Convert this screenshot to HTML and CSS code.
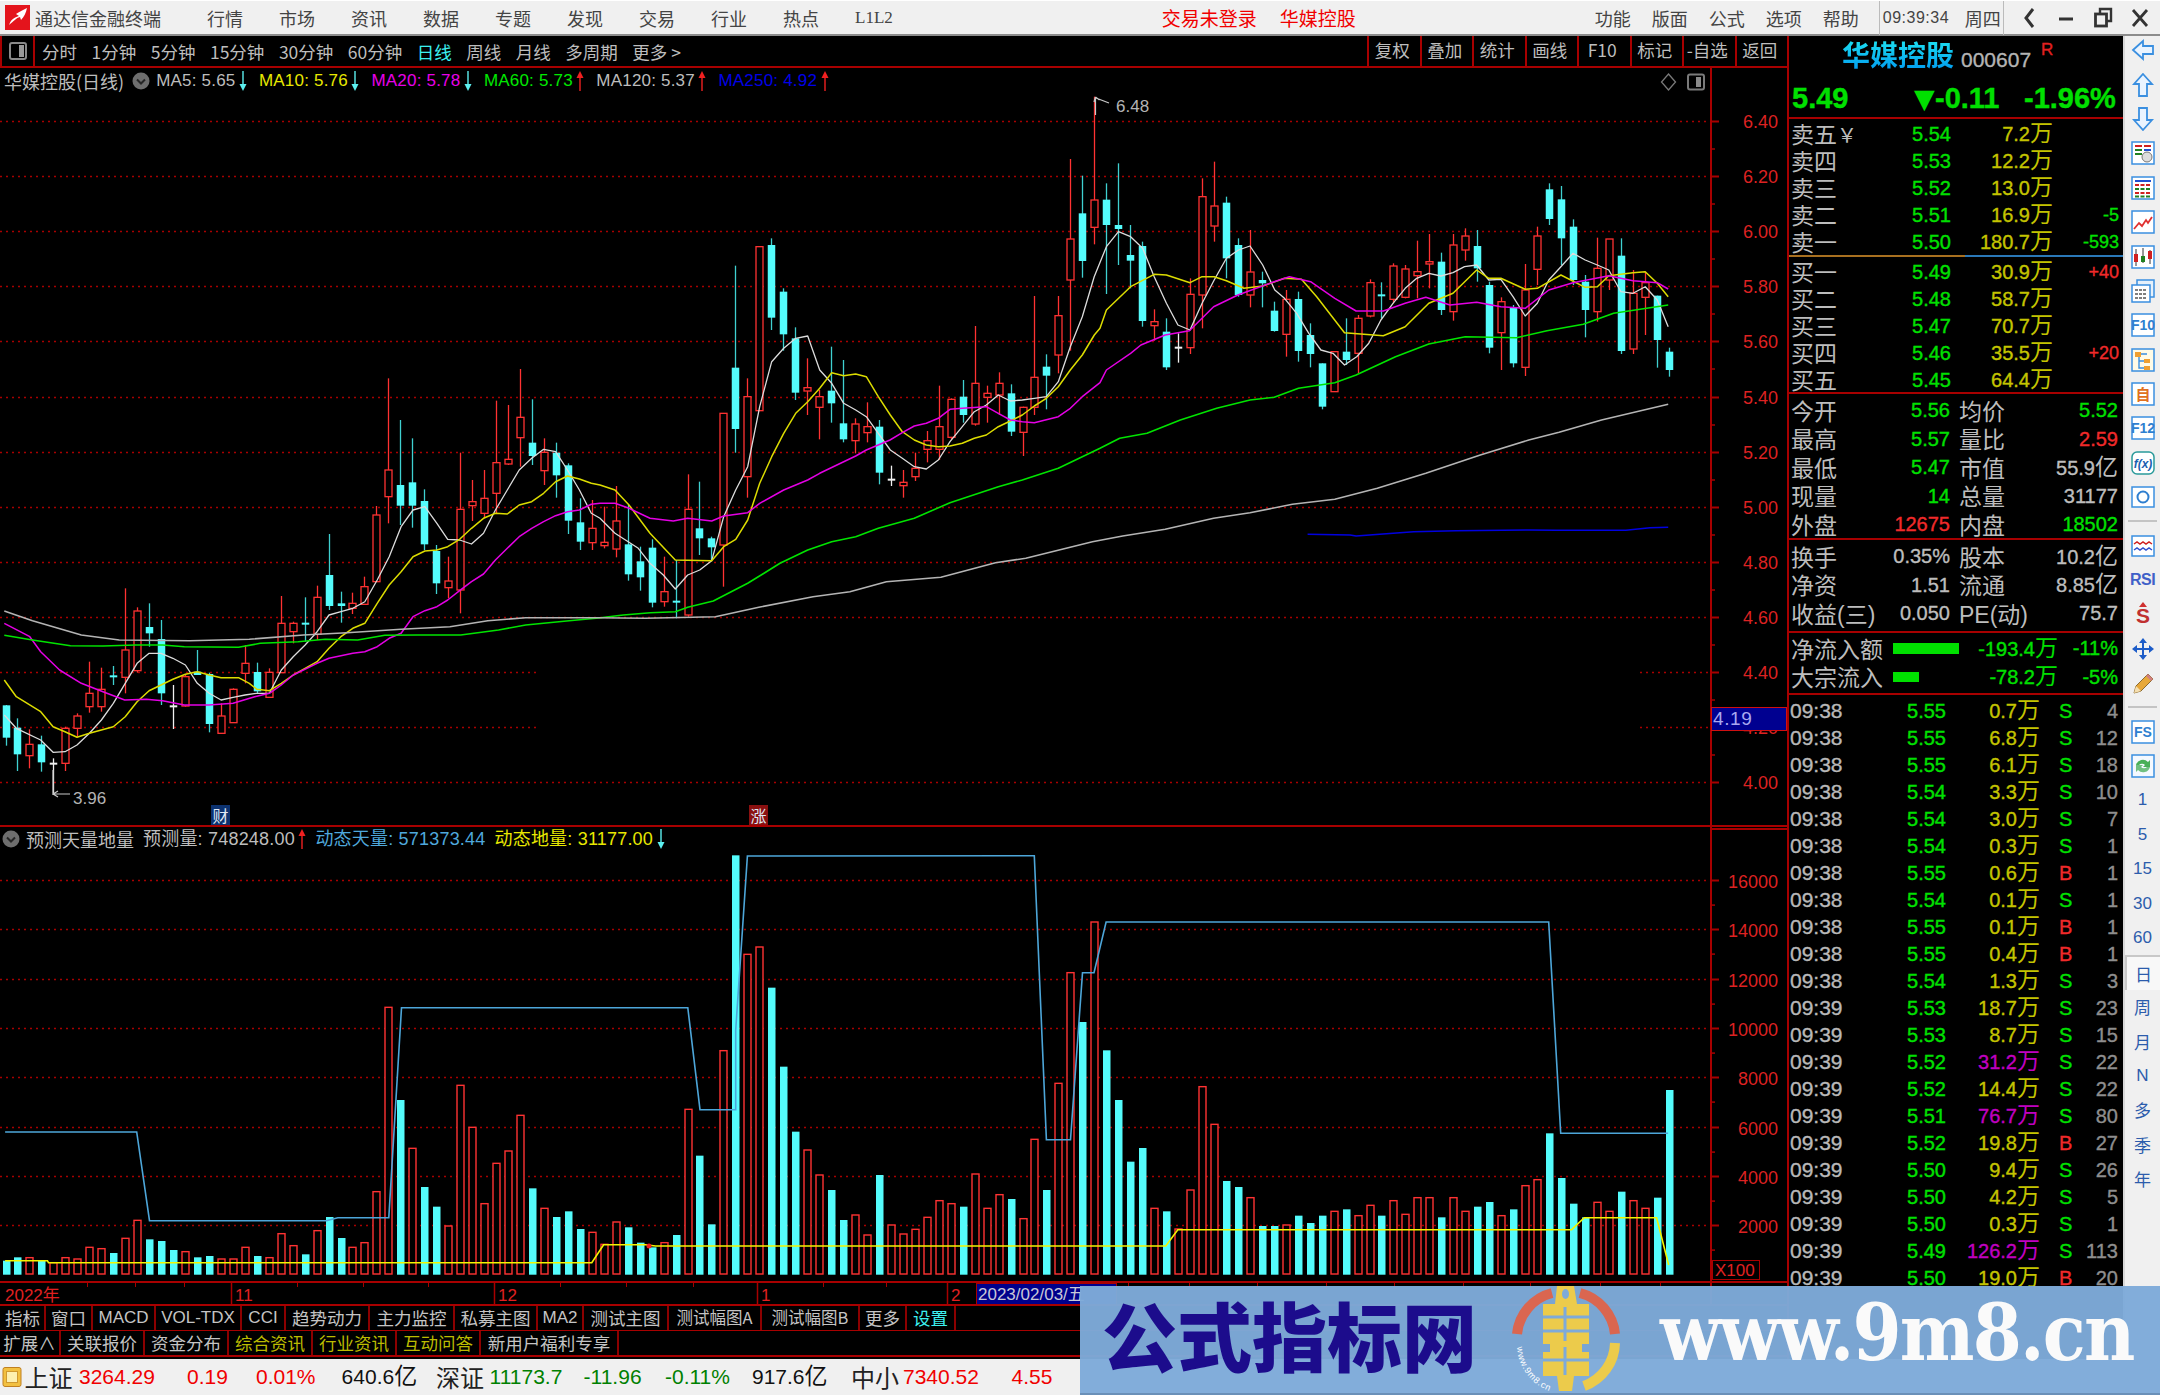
FILE: index.html
```html
<!DOCTYPE html>
<html lang="zh">
<head>
<meta charset="utf-8">
<title>通达信金融终端</title>
<link rel="stylesheet" href="styles.css">
</head>
<body>
<svg class="defs" width="0" height="0">
  <symbol id="a-up" viewBox="0 0 8 20"><path d="M4 20V5" stroke="currentColor" stroke-width="1.4"/><path d="M0.5 7L4 0l3.5 7z" fill="currentColor"/></symbol>
  <symbol id="a-dn" viewBox="0 0 8 20"><path d="M4 0v15" stroke="currentColor" stroke-width="1.4"/><path d="M0.5 13L4 20l3.5-7z" fill="currentColor"/></symbol>
  <symbol id="chev" viewBox="0 0 18 18"><circle cx="9" cy="9" r="8.5" fill="#6e6e6e"/><path d="M5 7.5l4 4 4-4" fill="none" stroke="#262626" stroke-width="2"/></symbol>
</svg>
<div class="app">
  <header class="menubar">
    <svg class="logo" viewBox="0 0 25 25"><rect width="25" height="25" fill="#e4141c"/><path d="M4 20c3-8 8-8 10-9L11 9c3-2 7-4 11-6-1 5-3 9-6 12l-1-3c-4 1-6 4-11 8z" fill="#fff"/></svg>
    <span class="appname">通达信金融终端</span>
    <nav class="menus">
      <span>行情</span><span>市场</span><span>资讯</span><span>数据</span><span>专题</span><span>发现</span><span>交易</span><span>行业</span><span>热点</span><span class="l2">L1L2</span>
    </nav>
    <span class="alert first">交易未登录</span>
    <span class="alert second">华媒控股</span>
    <nav class="menus right">
      <span>功能</span><span>版面</span><span>公式</span><span>选项</span><span>帮助</span>
    </nav>
    <div class="clock"><span class="time">09:39:34</span><span class="day">周四</span></div>
    <div class="winbtns">
      <svg viewBox="0 0 20 24"><path d="M14 3l-7 9 7 9" fill="none" stroke="#333" stroke-width="3"/></svg>
      <svg viewBox="0 0 20 24"><path d="M3 13h14" stroke="#333" stroke-width="3"/></svg>
      <svg viewBox="0 0 20 24"><path d="M7 7V3h11v12h-4" fill="none" stroke="#333" stroke-width="2.4"/><rect x="2.500" y="8" width="11" height="12" fill="none" stroke="#333" stroke-width="2.800"/></svg>
      <svg viewBox="0 0 20 24"><path d="M3 4l14 16M17 4L3 20" stroke="#333" stroke-width="2.800"/></svg>
    </div>
  </header>

  <div class="workspace">
    <section class="left">
      <div class="toolbar">
        <div class="panel-toggle"><svg viewBox="0 0 18 18"><rect x="1" y="1" width="16" height="16" rx="2" fill="none" stroke="#8a8a8a" stroke-width="2"/><rect x="10" y="3" width="5" height="12" fill="#9a9a9a"/></svg></div>
        <div class="periods">
          <span>分时</span><span>1分钟</span><span>5分钟</span><span>15分钟</span><span>30分钟</span><span>60分钟</span><span class="on">日线</span><span>周线</span><span>月线</span><span>多周期</span><span>更多 &gt;</span>
        </div>
        <div class="actions">
          <span>复权</span><span>叠加</span><span>统计</span><span>画线</span><span>F10</span><span>标记</span><span>-自选</span><span>返回</span>
        </div>
      </div>

      <div class="chart kline-wrap">
        <svg id="kline" class="kline" viewBox="0 68 1787 757"></svg>
        <div class="legend">
          <span class="gr name">华媒控股(日线)</span>
          <svg class="chev"><use href="#chev"/></svg>
          <span class="ma gr">MA5: 5.65<svg class="arr c-cy"><use href="#a-dn"/></svg></span>
          <span class="ma c-ye">MA10: 5.76<svg class="arr c-cy"><use href="#a-dn"/></svg></span>
          <span class="ma c-ma">MA20: 5.78<svg class="arr c-cy"><use href="#a-dn"/></svg></span>
          <span class="ma c-gn">MA60: 5.73<svg class="arr c-re"><use href="#a-up"/></svg></span>
          <span class="ma gr">MA120: 5.37<svg class="arr c-re"><use href="#a-up"/></svg></span>
          <span class="ma c-bl">MA250: 4.92<svg class="arr c-re"><use href="#a-up"/></svg></span>
        </div>
        <div class="tag price-tag">4.19</div>
        <div class="tag cai">财</div>
        <div class="tag zhang">涨</div>
      </div>

      <div class="chart vol-wrap">
        <svg id="vol" class="vol" viewBox="0 827 1787 454"></svg>
        <div class="legend vol-legend">
          <svg class="chev"><use href="#chev"/></svg>
          <span class="gr name">预测天量地量</span>
          <span class="ma gr">预测量: 748248.00<svg class="arr c-re"><use href="#a-up"/></svg></span>
          <span class="ma c-sky">动态天量: 571373.44</span>
          <span class="ma c-yl">动态地量: 31177.00<svg class="arr c-cy"><use href="#a-dn"/></svg></span>
        </div>
        <div class="x100">X100</div>
      </div>

      <svg id="dates" class="dates" viewBox="0 1283 1787 23"></svg>

      <div class="tabs one">
        <span>指标</span><span>窗口</span><span>MACD</span><span>VOL-TDX</span><span>CCI</span><span>趋势动力</span><span>主力监控</span><span>私募主图</span><span>MA2</span><span>测试主图</span><span>测试幅图A</span><span>测试幅图B</span><span>更多</span><span class="set">设置</span>
      </div>
      <div class="tabs two">
        <span>扩展∧</span><span>关联报价</span><span>资金分布</span><span class="ol">综合资讯</span><span class="ol">行业资讯</span><span class="ol">互动问答</span><span>新用户福利专享</span>
      </div>
    </section>

    <aside class="quote">
      <div class="head">
        <div class="title"><span class="sname">华媒控股</span><span class="code">000607</span><span class="rz">R</span></div>
        <div class="nowprice"><span>5.49</span><span class="chg"><i class="tri">▼</i>-0.11</span><span>-1.96%</span></div>
      </div>
      <div class="book sell">
        <div class="brow"><b>卖五<i class="yen">￥</i></b><span class="g">5.54</span><span class="y">7.2<i>万</i></span><span></span></div>
        <div class="brow"><b>卖四</b><span class="g">5.53</span><span class="y">12.2<i>万</i></span><span></span></div>
        <div class="brow"><b>卖三</b><span class="g">5.52</span><span class="y">13.0<i>万</i></span><span></span></div>
        <div class="brow"><b>卖二</b><span class="g">5.51</span><span class="y">16.9<i>万</i></span><span class="g small">-5</span></div>
        <div class="brow"><b>卖一</b><span class="g">5.50</span><span class="y">180.7<i>万</i></span><span class="g small">-593</span></div>
      </div>
      <div class="book-divider"><span></span><span></span></div>
      <div class="book buy">
        <div class="brow"><b>买一</b><span class="g">5.49</span><span class="y">30.9<i>万</i></span><span class="r small">+40</span></div>
        <div class="brow"><b>买二</b><span class="g">5.48</span><span class="y">58.7<i>万</i></span><span></span></div>
        <div class="brow"><b>买三</b><span class="g">5.47</span><span class="y">70.7<i>万</i></span><span></span></div>
        <div class="brow"><b>买四</b><span class="g">5.46</span><span class="y">35.5<i>万</i></span><span class="r small">+20</span></div>
        <div class="brow"><b>买五</b><span class="g">5.45</span><span class="y">64.4<i>万</i></span><span></span></div>
      </div>
      <div class="stats a">
        <div class="srow"><b>今开</b><span class="g">5.56</span><b>均价</b><span class="g">5.52</span></div>
        <div class="srow"><b>最高</b><span class="g">5.57</span><b>量比</b><span class="r">2.59</span></div>
        <div class="srow"><b>最低</b><span class="g">5.47</span><b>市值</b><span class="w">55.9<i>亿</i></span></div>
        <div class="srow"><b>现量</b><span class="g">14</span><b>总量</b><span class="w">31177</span></div>
        <div class="srow"><b>外盘</b><span class="r">12675</span><b>内盘</b><span class="g">18502</span></div>
      </div>
      <div class="stats b">
        <div class="srow"><b>换手</b><span class="w">0.35%</span><b>股本</b><span class="w">10.2<i>亿</i></span></div>
        <div class="srow"><b>净资</b><span class="w">1.51</span><b>流通</b><span class="w">8.85<i>亿</i></span></div>
        <div class="srow"><b>收益(三)</b><span class="w">0.050</span><b>PE(动)</b><span class="w">75.7</span></div>
      </div>
      <div class="flows">
        <div class="frow"><b>净流入额</b><span class="fbar"><em class="long"></em></span><span class="g">-193.4<i>万</i></span><span class="g">-11%</span></div>
        <div class="frow"><b>大宗流入</b><span class="fbar"><em class="short"></em></span><span class="g">-78.2<i>万</i></span><span class="g">-5%</span></div>
      </div>
      <div class="ticks">
        <div class="trow"><span>09:38</span><span class="g">5.55</span><span class="y">0.7<i>万</i></span><span class="g">S</span><span>4</span></div>
        <div class="trow"><span>09:38</span><span class="g">5.55</span><span class="y">6.8<i>万</i></span><span class="g">S</span><span>12</span></div>
        <div class="trow"><span>09:38</span><span class="g">5.55</span><span class="y">6.1<i>万</i></span><span class="g">S</span><span>18</span></div>
        <div class="trow"><span>09:38</span><span class="g">5.54</span><span class="y">3.3<i>万</i></span><span class="g">S</span><span>10</span></div>
        <div class="trow"><span>09:38</span><span class="g">5.54</span><span class="y">3.0<i>万</i></span><span class="g">S</span><span>7</span></div>
        <div class="trow"><span>09:38</span><span class="g">5.54</span><span class="y">0.3<i>万</i></span><span class="g">S</span><span>1</span></div>
        <div class="trow"><span>09:38</span><span class="g">5.55</span><span class="y">0.6<i>万</i></span><span class="r">B</span><span>1</span></div>
        <div class="trow"><span>09:38</span><span class="g">5.54</span><span class="y">0.1<i>万</i></span><span class="g">S</span><span>1</span></div>
        <div class="trow"><span>09:38</span><span class="g">5.55</span><span class="y">0.1<i>万</i></span><span class="r">B</span><span>1</span></div>
        <div class="trow"><span>09:38</span><span class="g">5.55</span><span class="y">0.4<i>万</i></span><span class="r">B</span><span>1</span></div>
        <div class="trow"><span>09:38</span><span class="g">5.54</span><span class="y">1.3<i>万</i></span><span class="g">S</span><span>3</span></div>
        <div class="trow"><span>09:39</span><span class="g">5.53</span><span class="y">18.7<i>万</i></span><span class="g">S</span><span>23</span></div>
        <div class="trow"><span>09:39</span><span class="g">5.53</span><span class="y">8.7<i>万</i></span><span class="g">S</span><span>15</span></div>
        <div class="trow"><span>09:39</span><span class="g">5.52</span><span class="p">31.2<i>万</i></span><span class="g">S</span><span>22</span></div>
        <div class="trow"><span>09:39</span><span class="g">5.52</span><span class="y">14.4<i>万</i></span><span class="g">S</span><span>22</span></div>
        <div class="trow"><span>09:39</span><span class="g">5.51</span><span class="p">76.7<i>万</i></span><span class="g">S</span><span>80</span></div>
        <div class="trow"><span>09:39</span><span class="g">5.52</span><span class="y">19.8<i>万</i></span><span class="r">B</span><span>27</span></div>
        <div class="trow"><span>09:39</span><span class="g">5.50</span><span class="y">9.4<i>万</i></span><span class="g">S</span><span>26</span></div>
        <div class="trow"><span>09:39</span><span class="g">5.50</span><span class="y">4.2<i>万</i></span><span class="g">S</span><span>5</span></div>
        <div class="trow"><span>09:39</span><span class="g">5.50</span><span class="y">0.3<i>万</i></span><span class="g">S</span><span>1</span></div>
        <div class="trow"><span>09:39</span><span class="g">5.49</span><span class="p">126.2<i>万</i></span><span class="g">S</span><span>113</span></div>
        <div class="trow"><span>09:39</span><span class="g">5.50</span><span class="y">19.0<i>万</i></span><span class="r">B</span><span>20</span></div>
      </div>
    </aside>

    <aside class="side">
      <div class="slot first"><svg viewBox="0 0 24 24"><path d="M2 12L12 3v5h10v8H12v5z" fill="#eaf4ff" stroke="#3a8fe0" stroke-width="1.800"/></svg></div>
      <div class="slot"><svg viewBox="0 0 24 24"><path d="M12 1l9 10h-5v12H8V11H3z" fill="#eaf4ff" stroke="#3a8fe0" stroke-width="1.800"/></svg></div>
      <div class="slot"><svg viewBox="0 0 24 24"><path d="M12 23l9-10h-5V1H8v12H3z" fill="#eaf4ff" stroke="#3a8fe0" stroke-width="1.800"/></svg></div>
      <div class="slot"><svg viewBox="0 0 24 24"><rect x="1" y="1" width="22" height="22" fill="#fff" stroke="#3a8fe0" stroke-width="1.500"/><path d="M4 5h7M13 5h7" stroke="#d02020" stroke-width="2"/><path d="M4 9h7M4 13h7" stroke="#208020" stroke-width="2"/><path d="M13 9h7" stroke="#2050d0" stroke-width="2"/><circle cx="16" cy="16" r="5" fill="#ddd" stroke="#777"/></svg></div>
      <div class="slot"><svg viewBox="0 0 24 24"><rect x="1" y="1" width="22" height="22" fill="#fff" stroke="#3a8fe0" stroke-width="1.500"/><path d="M4 5h16" stroke="#2050d0" stroke-width="2"/><path d="M4 9h16M4 17h16" stroke="#d02020" stroke-width="2" stroke-dasharray="4 1.500"/><path d="M4 13h16M4 20.500h16" stroke="#208020" stroke-width="2" stroke-dasharray="4 1.500"/></svg></div>
      <div class="slot"><svg viewBox="0 0 24 24"><rect x="1" y="1" width="22" height="22" fill="#fff" stroke="#3a8fe0" stroke-width="1.500"/><path d="M3 19l5-6 3 3 4-6 2 3 4-6" fill="none" stroke="#e03030" stroke-width="1.800"/></svg></div>
      <div class="slot"><svg viewBox="0 0 24 24"><rect x="1" y="1" width="22" height="22" fill="#fff" stroke="#3a8fe0" stroke-width="1.500"/><path d="M5 4v17M12 3v15M19 5v14" stroke="#333"/><rect x="3" y="9" width="4" height="8" fill="#d02020"/><rect x="10" y="11" width="4" height="6" fill="#208020"/><rect x="17" y="6" width="4" height="8" fill="#d02020"/></svg></div>
      <div class="slot"><svg viewBox="0 0 24 24"><rect x="6" y="1" width="17" height="17" fill="#e6f1fb" stroke="#3a8fe0" stroke-width="1.500"/><rect x="1" y="6" width="18" height="17" fill="#fff" stroke="#3a8fe0" stroke-width="1.500"/><path d="M4 11h12M4 15h12M4 19h12" stroke="#555" stroke-width="1.500" stroke-dasharray="3 1"/></svg></div>
      <div class="slot"><svg viewBox="0 0 24 24"><rect x="1" y="1" width="22" height="22" fill="#fff" stroke="#3a8fe0" stroke-width="1.500"/><text class="icotxt" x="12" y="17">F10</text></svg></div>
      <div class="slot"><svg viewBox="0 0 24 24"><rect x="1" y="1" width="22" height="22" fill="#fffbe6" stroke="#3a8fe0" stroke-width="1.500"/><path d="M8 6h8M8 6v14h8M8 13h8" fill="none" stroke="#3a8fe0" stroke-width="1.400"/><rect x="4" y="4" width="6" height="5" fill="#f0a030"/><rect x="13" y="11" width="6" height="4" fill="#f0a030"/><rect x="13" y="18" width="6" height="4" fill="#f0a030"/></svg></div>
      <div class="slot"><svg viewBox="0 0 24 24"><rect x="1" y="1" width="22" height="22" fill="#fff" stroke="#3a8fe0" stroke-width="1.500"/><text class="icotxt zi" x="12" y="18">自</text></svg></div>
      <div class="slot"><svg viewBox="0 0 24 24"><rect x="1" y="1" width="22" height="22" fill="#fff" stroke="#3a8fe0" stroke-width="1.500"/><text class="icotxt" x="12" y="17">F12</text></svg></div>
      <div class="slot"><svg viewBox="0 0 24 24"><rect x="1" y="1" width="22" height="22" rx="5" fill="#fff" stroke="#2a9a9a" stroke-width="1.500"/><text class="icotxt fx" x="12" y="17">f(x)</text></svg></div>
      <div class="slot"><svg viewBox="0 0 24 24"><rect x="1" y="2" width="22" height="20" fill="#fff" stroke="#3a8fe0" stroke-width="1.500"/><circle cx="12" cy="12" r="5.500" fill="none" stroke="#2f7fd0" stroke-width="2"/></svg></div>
      <div class="rule"></div>
      <div class="slot"><svg viewBox="0 0 24 24"><rect x="1" y="2" width="22" height="20" fill="#fff" stroke="#3a8fe0" stroke-width="1.500"/><path d="M3 10l3-2 3 2 3-2 3 2 3-2 3 2" fill="none" stroke="#d02020" stroke-width="1.500"/><path d="M3 16l3-2 3 2 3-2 3 2 3-2 3 2" fill="none" stroke="#3050d0" stroke-width="1.500"/></svg></div>
      <div class="slot"><span class="rsi">RSI</span></div>
      <div class="slot"><svg viewBox="0 0 24 24"><path d="M12 0l4 5H8z" fill="#d03030"/><text class="icotxt dollar" x="12" y="21">S</text></svg></div>
      <div class="slot"><svg viewBox="0 0 24 24"><path d="M12 1l4 5h-3v5h5V8l5 4-5 4v-3h-5v5h3l-4 5-4-5h3v-5H6v3l-5-4 5-4v3h5V6H8z" fill="#1c5cc8"/></svg></div>
      <div class="slot"><svg viewBox="0 0 24 24"><path d="M3 22l2-7L17 3l5 5L10 20z" fill="#e8a838" stroke="#8a6a30" stroke-width="1"/><path d="M3 22l2-7 5 5z" fill="#f5dfb0"/><path d="M17 3l5 5-2 2-5-5z" fill="#d08080"/></svg></div>
      <div class="rule"></div>
      <div class="slot"><svg viewBox="0 0 24 24"><rect x="1" y="1" width="22" height="22" fill="#fff" stroke="#3a8fe0" stroke-width="1.500"/><text class="icotxt" x="12" y="17">FS</text></svg></div>
      <div class="slot"><svg viewBox="0 0 24 24"><rect x="1" y="1" width="22" height="22" fill="#f4f9ff" stroke="#3a8fe0" stroke-width="1.500"/><path d="M5 11a7 7 0 0 1 12-3l2-2v7h-7l2-2a4 4 0 0 0-6 0z" fill="#48b058"/><path d="M19 13a7 7 0 0 1-12 3l-2 2v-7h7l-2 2a4 4 0 0 0 6 0z" fill="#70c080"/></svg></div>
      <div class="slot t">1</div><div class="slot t">5</div><div class="slot t">15</div><div class="slot t">30</div><div class="slot t">60</div>
      <div class="slot t sel">日</div>
      <div class="slot t">周</div><div class="slot t">月</div><div class="slot t">N</div><div class="slot t">多</div><div class="slot t">季</div><div class="slot t">年</div>
    </aside>
  </div>

  <footer class="status">
    <svg class="sicon" viewBox="0 0 20 20"><rect x="1" y="0.500" width="18" height="19" rx="2" fill="#f2c040" stroke="#c08020"/><rect x="4.500" y="4.500" width="11" height="11" fill="#fdf0b0" stroke="#d09a30"/></svg>
    <span class="ix">上证</span><span class="r">3264.29</span><span class="r">0.19</span><span class="r">0.01%</span><span class="k">640.6<i>亿</i></span>
    <span class="ix">深证</span><span class="d">11173.7</span><span class="d">-11.96</span><span class="d">-0.11%</span><span class="k">917.6<i>亿</i></span>
    <span class="ix">中小</span><span class="r">7340.52</span><span class="r">4.55</span>
  </footer>

  <div class="banner">
    <span class="bcn">公式指标网</span>
    <svg class="blogo" viewBox="0 0 110 110">
      <path id="arc-t" d="M5 62A50 50 0 0 0 44 108" fill="none"/>
      <path d="M5 49A47 47 0 0 1 40 8M68 8A47 47 0 0 1 103 49" fill="none" stroke="#da6650" stroke-width="10"/>
      <path d="M103 58A47 47 0 0 1 72 101" fill="none" stroke="#eccb4b" stroke-width="10"/>
      <path d="M45 1h17l3 18h12v40H70v8h7v24H62l-2 15H47l-2-15H31V67h7v-8h-7V19h12z" fill="#eccb4b"/>
      <ellipse cx="53.500" cy="9" rx="3.500" ry="5" fill="#7eaad9"/>
      <path d="M31 32h46M31 46h46M53 22v34M31 75h46M53 62v28" stroke="#7eaad9" stroke-width="3"/>
      <text class="arctext"><textPath href="#arc-t">www.9m8.cn</textPath></text>
    </svg>
    <span class="ben">www.9m8.cn</span>
  </div>
</div>
<script src="chart.js"></script>
</body>
</html>
```

FILE: styles.css
```css
* { box-sizing: border-box; }
html, body { margin: 0; padding: 0; background: #000; }
body { width: 2160px; height: 1395px; overflow: hidden; font-family: "Liberation Sans", "Noto Sans CJK SC", sans-serif; }
i, em { font-style: normal; }
b { font-weight: 400; }
.defs { position: absolute; }
.app { position: relative; width: 2160px; height: 1395px; display: flex; flex-direction: column; }

/* menu bar */
.menubar { height: 36px; flex: none; display: flex; align-items: center; background: #f0f0f0; border-bottom: 2px solid #8c8c8c; border-top: 1px solid #fff; color: #444; font-size: 18px; font-family: "Noto Sans CJK SC", sans-serif; line-height: 1; }
.logo { width: 25px; height: 25px; margin-left: 5px; flex: none; }
.appname { margin-left: 5px; width: 127px; white-space: nowrap; }
.menus { display: flex; gap: 36px; margin-left: 45px; }
.menus span { white-space: nowrap; }
.menus .l2 { font-family: "Liberation Serif", serif; font-size: 17px; }
.alert { color: #f00000; font-size: 19px; white-space: nowrap; }
.alert.first { margin-left: 269px; }
.alert.second { margin-left: 23px; }
.menus.right { margin-left: 239px; gap: 21px; }
.clock { margin-left: 20px; height: 34px; width: 125px; display: flex; align-items: center; border-left: 1px solid #bbb; border-right: 1px solid #bbb; padding-left: 3px; }
.time { font-family: "Liberation Sans", sans-serif; font-size: 16px; letter-spacing: 0.500px; width: 82px; white-space: nowrap; }
.day { font-size: 18px; white-space: nowrap; }
.winbtns { display: flex; margin-left: 15px; gap: 17px; }
.winbtns svg { width: 20px; height: 24px; }

/* workspace */
.workspace { flex: none; height: 1323px; display: flex; background: #000; }
.left { width: 1787px; flex: none; display: flex; flex-direction: column; }

.toolbar { height: 32px; flex: none; display: flex; align-items: stretch; border-bottom: 2px solid #a80000; color: #bdbdbd; font-family: "Noto Sans CJK SC", sans-serif; font-size: 17.500px; }
.panel-toggle { width: 35px; display: flex; align-items: center; justify-content: center; border-left: 2px solid #a80000; border-right: 2px solid #a80000; }
.panel-toggle svg { width: 18px; height: 18px; }
.periods { display: flex; align-items: center; gap: 14.500px; margin-left: 7px; }
.periods span { white-space: nowrap; }
.periods .on { color: #3cf0f0; }
.actions { display: flex; margin-left: auto; }
.actions span { width: 52.500px; text-align: center; line-height: 28px; border-left: 2px solid #a80000; white-space: nowrap; padding-right: 4px; }

.chart { position: relative; flex: none; border-bottom: 2px solid #a80000; }
.kline-wrap { height: 759px; }
.vol-wrap { height: 456px; }
.kline, .vol, .dates { display: block; width: 1787px; }
.kline { height: 757px; }
.vol { height: 454px; }
.dates { height: 23px; flex: none; }
svg text { font-family: "Liberation Sans", "Noto Sans CJK SC", sans-serif; }
.axis-t { fill: #dc2222; font-size: 18px; text-anchor: end; }
.peak-t { fill: #b4b4b4; font-size: 17px; }
.date-t { fill: #e02020; font-size: 17px; }
.date-tag { fill: #c8c8d8; font-size: 17px; }

.legend { position: absolute; left: 0; top: 0; height: 25px; display: flex; align-items: center; gap: 12px; font-size: 17px; letter-spacing: 0.200px; padding-left: 4px; white-space: nowrap; }
.legend .name { margin-right: -4px; font-family: "Noto Sans CJK SC", sans-serif; letter-spacing: 0; font-size: 18px; line-height: 1; }
.legend .name + .chev { margin-right: -6px; }
.legend .ma { display: flex; align-items: center; gap: 3.500px; }
.chev { width: 18px; height: 18px; flex: none; }
.arr { width: 8px; height: 20px; }
.gr { color: #bdbdbd; }
.c-cy { color: #5cf0f0; }
.c-re { color: #f02020; }
.c-ye { color: #e8e800; }
.c-ma { color: #e800e8; }
.c-gn { color: #00e800; }
.c-bl { color: #0000e8; }
.c-sky { color: #4fa8dc; }
.c-yl { color: #e8e800; }
.vol-legend { top: 0; height: 24px; font-size: 18px; padding-left: 2px; gap: 9px; }
.legend.vol-legend .name { margin-left: -3px; margin-right: 0; }
.vol-legend .ma { font-family: "Liberation Sans", "Noto Sans CJK SC", sans-serif; line-height: 1; }

.tag { position: absolute; }
.price-tag { left: 1711px; top: 639px; width: 76px; height: 24px; background: #000090; border: 1px solid #d01010; color: #a8a8f0; font-size: 19px; line-height: 22px; padding-left: 1px; letter-spacing: 0.600px; }
.cai, .zhang { top: 737px; width: 19px; height: 20px; color: #dfe8f5; font-size: 16px; line-height: 20px; text-align: center; font-family: "Noto Sans CJK SC", sans-serif; }
.cai { left: 211px; background: #0c3270; }
.zhang { left: 749px; background: #8a1010; }
.x100 { position: absolute; left: 1712px; top: 433px; width: 48px; height: 20px; border: 1px solid #a80000; color: #e02020; font-size: 17px; line-height: 19px; padding-left: 2px; }

.tabs { display: flex; flex: none; color: #c4c4c4; font-family: "Noto Sans CJK SC", sans-serif; font-size: 17.500px; white-space: nowrap; }
.tabs span { padding: 0 5px; border-right: 2px solid #8c0000; text-align: center; }
.tabs.one { height: 25px; line-height: 23px; border-bottom: 1px solid #a80000; }
.tabs.two { height: 26px; line-height: 24px; border-bottom: 2px solid #a80000; }
.tabs.one span:nth-child(1) { width: 46px; }
.tabs.one span:nth-child(2) { width: 47px; }
.tabs.one span:nth-child(3) { width: 63px; font-family: "Liberation Sans", sans-serif; font-size: 17px; }
.tabs.one span:nth-child(4) { width: 86px; font-family: "Liberation Sans", sans-serif; font-size: 17px; padding: 0; }
.tabs.one span:nth-child(5) { width: 44px; font-family: "Liberation Sans", sans-serif; font-size: 17px; padding: 0; }
.tabs.one span:nth-child(6) { width: 84px; padding: 0; }
.tabs.one span:nth-child(7) { width: 85px; padding: 0; }
.tabs.one span:nth-child(8) { width: 83px; padding: 0; }
.tabs.one span:nth-child(9) { width: 46px; font-family: "Liberation Sans", sans-serif; font-size: 17px; padding: 0; }
.tabs.one span:nth-child(10) { width: 85px; padding: 0; }
.tabs.one span:nth-child(11) { width: 93px; padding: 0; font-size: 16.500px; }
.tabs.one span:nth-child(12) { width: 98px; padding: 0; font-size: 16.500px; }
.tabs.one span:nth-child(13) { width: 47px; padding: 0; }
.tabs.one span:nth-child(14) { width: 49px; padding: 0; color: #3cf0f0; }
.tabs.two span { padding: 0; }
.tabs.two span:nth-child(1) { width: 61px; }
.tabs.two span:nth-child(2), .tabs.two span:nth-child(3), .tabs.two span:nth-child(4), .tabs.two span:nth-child(5), .tabs.two span:nth-child(6) { width: 84px; }
.tabs.two span:nth-child(7) { width: 138px; }
.tabs .ol { color: #bcbc00; }

/* quote panel: Latin font first so the row boxes stay shorter than the rows */
.quote { width: 336px; flex: none; border-left: 2px solid #a80000; padding-left: 2px; display: flex; flex-direction: column; color: #bdbdbd; font-size: 20px; line-height: 1; -webkit-text-stroke: 0.350px; }
.quote i { font-family: "Liberation Sans", "Noto Sans CJK SC", sans-serif; font-size: 23px; -webkit-text-stroke: 0; }
.quote b { font-family: "Liberation Sans", "Noto Sans CJK SC", sans-serif; font-size: 23px; color: #bdbdbd; white-space: nowrap; -webkit-text-stroke: 0; padding-top: 4px; }
.g { color: #00e000; }
.r { color: #f02a2a; }
.y { color: #c4c400; }
.w { color: #bdbdbd; }
.p { color: #c000c0; }
.head { height: 83px; flex: none; margin-left: -4px; padding-left: 4px; border-bottom: 2px solid #a80000; }
.title { height: 36px; display: flex; align-items: center; padding-left: 51px; white-space: nowrap; }
.sname { font-family: "Noto Sans CJK SC", sans-serif; font-weight: 700; font-size: 28px; line-height: 36px; background: linear-gradient(#20e8f0, #0098f0); -webkit-background-clip: text; background-clip: text; color: transparent; -webkit-text-stroke: 0; }
.code { font-size: 21px; color: #b4b4b4; margin-left: 7px; margin-top: 10px; }
.rz { color: #e02020; font-size: 17px; margin-left: 10px; margin-top: -9px; }
.nowprice { display: grid; grid-template-columns: 122px 110px 100px; height: 36px; margin-top: 8px; align-items: center; color: #00e000; font-size: 29px; font-weight: 700; padding-left: 1px; }
.chg { display: flex; align-items: center; }
.quote .nowprice .tri { font-family: "DejaVu Sans", sans-serif; font-size: 27px; width: 21px; display: block; }
.book { flex: none; }
.sell { height: 136px; padding-top: 1px; }
.buy { height: 137px; padding-top: 1px; margin-left: -4px; padding-left: 4px; border-bottom: 2px solid #a80000; }
.brow { height: 27px; display: grid; grid-template-columns: 100px 60px 102px 66px; align-items: center; }
.brow span { text-align: right; white-space: nowrap; }
.brow .small { font-size: 18px; }
.quote .yen { color: #bdbdbd; font-size: 20px; }
.book-divider { height: 2px; flex: none; display: flex; margin-left: -2px; }
.book-divider span:first-child { width: 176px; background: #a87020; }
.book-divider span:last-child { flex: 1; background: #2a78b8; }

.stats { flex: none; margin-left: -4px; padding-left: 4px; border-bottom: 2px solid #a80000; }
.stats.a { height: 146px; padding-top: 2px; }
.stats.b { height: 93px; padding-top: 2px; }
.srow { height: 28.500px; display: grid; grid-template-columns: 60px 99px 69px 99px; align-items: center; }
.srow span { text-align: right; white-space: nowrap; }
.srow b:nth-of-type(2) { padding-left: 9px; }

.flows { height: 62px; flex: none; padding-top: 1px; margin-left: -4px; padding-left: 4px; border-bottom: 2px solid #a80000; }
.frow { height: 28.500px; display: grid; grid-template-columns: 102px 66px 99px 60px; align-items: center; }
.frow > span { text-align: right; white-space: nowrap; }
.fbar { display: block; }
.fbar em { display: block; height: 10.500px; background: #00e000; }
.fbar .long { width: 66px; }
.fbar .short { width: 26px; }

.ticks { flex: 1; min-height: 0; padding-top: 2px; }
.trow { height: 27px; display: grid; grid-template-columns: 100px 55px 94px 32px 46px; align-items: center; white-space: nowrap; }
.trow span { text-align: right; }
.trow span:first-child { text-align: left; margin-left: -1px; font-size: 21px; color: #b8b8b8; }
.trow span:nth-child(4) { text-align: left; padding-left: 19px; }
.trow span:nth-child(5) { color: #8e8e8e; }

/* right sidebar */
.side { width: 37px; flex: none; background: #f0f0f0; border-left: 2px solid #d8d8d8; display: flex; flex-direction: column; align-items: center; }
.slot { height: 34.400px; width: 35px; flex: none; display: flex; align-items: center; justify-content: center; }
.slot.first { margin-top: -3px; }
.slot svg { width: 24px; height: 24px; }
.rule { height: 14px; width: 29px; flex: none; position: relative; }
.rule::after { content: ""; position: absolute; left: 0; right: 0; top: 6px; height: 2px; background: #c4c4c4; }
.icotxt { font-size: 14px; fill: #2f7fd0; text-anchor: middle; font-weight: 700; }
.icotxt.zi { fill: #e07020; font-size: 15px; font-family: "Noto Sans CJK SC", sans-serif; }
.icotxt.fx { font-size: 12px; fill: #1a5fb0; font-style: italic; }
.icotxt.dollar { font-size: 21px; fill: #c03030; }
.rsi { color: #3f60c8; font-size: 16px; font-weight: 700; letter-spacing: -0.500px; }
.slot.t { color: #2c5cac; font-size: 17px; font-family: "Liberation Sans", "Noto Sans CJK SC", sans-serif; }
.slot.t.sel { background: #f8f8f8; border-top: 2px solid #c8c8c8; border-left: 2px solid #c8c8c8; }

/* status bar */
.status { position: relative; height: 36px; flex: none; background: #f0f0f0; display: grid; grid-template-columns: 24.500px 54.500px 108px 69px 85.600px 94.400px 53.600px 94px 81.400px 87px 99px 52px 108.600px 69px; align-items: center; font-size: 21px; line-height: 1; white-space: nowrap; padding-bottom: 1px; }
.status i { font-family: "Liberation Sans", "Noto Sans CJK SC", sans-serif; font-size: 23px; font-style: normal; }
.sicon { width: 20px; height: 20px; margin-left: 2px; }
.status .ix { font-family: "Liberation Sans", "Noto Sans CJK SC", sans-serif; font-size: 24px; color: #222; padding-top: 4px; }
.status .r { color: #f00000; }
.status .d { color: #008000; }
.status .k { color: #111; }

/* watermark banner */
.banner { position: absolute; left: 1080px; right: 0; top: 1286px; bottom: 0; display: flex; align-items: center; background: rgba(126, 170, 217, 0.97); border-bottom: 2px solid #6a90b8; }
.bcn { font-family: "Liberation Sans", "Noto Sans CJK SC", sans-serif; font-weight: 900; font-size: 75px; line-height: 1; color: #1c0c8c; margin-left: 22px; margin-top: 2px; white-space: nowrap; letter-spacing: 0; width: 375px; flex: none; }
.blogo { width: 110px; height: 110px; flex: none; margin-left: 35px; }
.arctext { font-size: 9px; fill: #fff; font-family: "Liberation Sans", sans-serif; letter-spacing: 0.700px; }
.ben { font-family: "DejaVu Serif", serif; font-weight: 700; font-size: 78px; line-height: 1; color: #fafafa; margin-left: 38px; margin-top: -14px; white-space: nowrap; letter-spacing: -2px; transform: scaleX(0.905); transform-origin: left center; flex: none; width: 480px; }
```

FILE: chart.js
```js
const NS = 'http://www.w3.org/2000/svg';
function add(svg, tag, attrs, text) {
  const el = document.createElementNS(NS, tag);
  for (const k in attrs) el.setAttribute(k, attrs[k]);
  if (text !== undefined) el.textContent = text;
  svg.appendChild(el);
  return el;
}
const RED = '#ff3232', CY = '#54fcfc', AX = '#a80000', DOT = '#a80000';
const X = i => 5.5 + 11.965 * i;
const Z10 = (x, y) => [x / 1.845, 350 + y / 3];
const Z12 = (x, y) => [600 + x / 3, 200 + y / 3];
const Z11 = (x, y) => [850 + x / 1.65, 90 + y / 3];
const Z8 = (x, y) => [x / 1.96, 810 + y / 3];
const Z9 = (x, y) => [900 + x / 1.742, 810 + y / 3];

/* candles as: colour high top bottom low, read off the chart */
const c10 = `c 1065 1066 1163 1187,c 1105 1133 1213 1263,r 1138 1183 1217 1255,c 1157 1183 1237 1265,w 1225 1238 1240 1335,r 1130 1135 1240 1263,r 1090 1098 1135 1160,r 935 1030 1070 1088,r 953 1018 1070 1085,c 948 976 978 1005,r 715 900 982 1030,r 772 783 962 968,c 760 831 850 890,c 810 867 1030 1065,w 1005 1066 1070 1137,r 975 980 1068 1070,c 900 965 975 975,c 968 972 1122 1147,r 1060 1098 1150 1150,r 1015 1018 1118 1118,r 885 940 970 1000,c 938 966 1024 1030,r 955 967 1042 1042,r 738 820 968 968,r 815 820 845 880,c 742 818 822 875,r 707 742 853 870,c 552 675 768 780,c 725 760 768 818,r 728 760 775 792,r 680 710 763 763,r 468 495 695 695,r 85 360 440 520,c 210 405 467 525,c 265 397 467 533,c 418 453 583 600,c 585 603 700 732,r 620 693 713 745,r 308 478 720 790,r 390 455 467 513,r 360 445 490 505,r 152 338 430 490,r 165 328 342 345,r 57 202 263 350,c 148 278 318 345,r 265 307 362 405,c 278 308 376 443,c 340 346 512 552,c 445 517 575 600,r 450 535 578 600,r 470 577 587 595,r 408 513 597 622,c 465 583 673 692,c 590 634 682 722,c 568 593 758 772,r 620 725 755 770,c 630 752 758 805`;
const c12 = `r 823 928 1245 1250,c 845 985 1015 1065,c 1010 1015 1042 1080,r 640 640 1035 1160,c 197 503 687 758,r 535 590 830 893,r 140 140 632 632,c 115 135 353 390,c 265 275 403 452,c 382 415 578 600,r 475 563 573 645,r 570 590 622 718,c 440 572 610 668,c 480 670 718 727,r 655 672 722 760,r 607 680 698 727,c 660 680 818 853,w 797 836 840 858,r 810 847 857 893,r 758 805 830 843,r 693 722 748 787,r 557 680 748 780,r 595 598 712 718,c 540 590 645 668,r 378 550 672 677,r 557 580 592 668,r 517 550 585 645,c 553 580 695 708,r 620 622 697 768,r 288 532 622 645,c 463 500 527 628,r 288 347 465 520`;
const c11 = `r 207 447 570 782,c 257 370 513 563,r 20 330 412 463,c 280 329 405 612,c 220 405 417 525,c 405 495 512 595,c 455 468 693 710,r 658 695 707 752,c 685 725 832 840,w 730 770 773 818,r 565 613 773 792,r 265 320 615 715,r 215 348 408 455,c 320 338 505 565,c 445 465 615 620,r 420 546 615 652,c 545 570 580 652,c 635 662 723 725,r 600 628 733 800,c 605 627 783 815,c 700 735 792 832,c 820 820 950 958,r 785 785 905 905,c 685 785 810 825,r 675 685 790 850,r 568 578 678 682,c 577 613 617 685,r 520 528 628 640,r 525 537 622 625,r 452 545 557 625,r 432 515 522 595,c 488 515 660 675,r 432 465 665 692,r 415 438 480 512,c 420 468 535 575,c 575 585 773 790,r 622 635 728 840,c 645 652 820 832,r 522 600 832 858,r 410 438 538 585,c 280 298 387 405,c 288 328 445 525,c 388 410 570 585,c 555 575 660 742,r 443 535 665 695,r 447 447 570 600,c 445 497 783 792,r 540 610 777 792,r 545 578 622 735,c 617 617 750 833,c 773 785 840 860`;
function parse(s, off) {
  return s.split(',').map(p => {
    const a = p.split(' ');
    return [a[0], ...a.slice(1).map(v => off + v / 3)];
  });
}
const candles = [...parse(c10, 350), ...parse(c12, 200), ...parse(c11, 90)];

/* moving averages: [transform, [x, y, ...]] */
const lines = [
  { col: '#dcdcdc', w: 1.3, seg: [[Z10, [8,1095,30,1135,75,1170,98,1207,120,1205,142,1185,165,1150,187,1110,209,1060,231,1000,253,940,275,910,297,910,319,925,342,945,364,1000,386,1030,408,1050,430,1042,452,1035,474,1030,497,1030,519,960,541,920,563,885,585,845,607,795,629,785,651,775,673,755,696,690,718,620,740,530,762,480,784,470,806,520,826,568,848,570,870,582,892,550,914,480,936,420,958,360,981,325,1003,298,1025,305,1047,360,1069,420,1091,490]],
    [Z12, [0,955,45,1000,115,1045,150,1090,190,1125,226,1167,263,1125,299,1110,335,1082,371,950,407,870,443,800,479,620,515,485,551,445,587,415,623,408,659,510,695,550,731,610,767,630,799,650,835,700,871,750,907,775,943,800,979,807,1015,780,1050,725,1087,680,1123,635,1159,615,1195,585,1231,603,1267,600,1303,595,1339,590,1375,545,1411,440,1447,350]],
    [Z11, [403,560,423,470,443,425,463,440,483,475,502,560,522,640,541,705,561,720,581,640,601,570,621,505,641,480,660,468,681,525,701,600,717,625,737,670,757,730,777,780,797,790,816,825,836,800,856,760,876,690,896,640,916,595,935,565,955,550,975,558,995,548,1014,530,1034,525,1054,570,1074,568,1094,620,1114,678,1134,640,1153,570,1173,530,1193,490,1213,510,1233,525,1252,540,1272,605,1292,610,1312,590,1332,630,1350,710]]] },
  { col: '#dcdc00', w: 1.5, seg: [[Z10, [8,990,30,1040,75,1085,98,1130,120,1145,142,1162,165,1150,209,1130,231,1100,253,1055,275,1022,297,1005,319,988,342,973,364,965,386,975,408,983,440,983,460,1000,474,1018,497,1022,519,1000,541,975,563,955,585,935,607,895,629,860,651,835,673,820,696,760,718,705,740,665,762,620,784,603,806,600,826,590,848,568,870,535,892,505,914,490,936,492,958,465,981,455,1003,430,1025,395,1047,378,1069,387,1091,400]],
    [Z12, [0,855,45,870,87,915,150,1000,226,1080,335,1082,371,1040,407,1018,443,960,479,850,515,770,551,700,587,640,623,605,659,565,695,518,731,527,767,522,799,530,835,590,871,645,907,695,943,720,979,735,1015,740,1050,738,1087,730,1123,715,1159,705,1195,680,1231,663,1267,645,1303,618,1339,595,1375,560,1411,510,1447,465,1483,405,1500,385]],
    [Z11, [423,660,463,590,502,553,522,555,561,578,581,560,601,560,621,572,650,595,681,588,717,565,745,568,770,620,816,728,880,737,916,710,955,640,995,610,1034,540,1054,565,1074,565,1114,598,1134,595,1173,555,1213,592,1233,590,1252,557,1292,548,1312,545,1332,580,1350,620]]] },
  { col: '#e400e4', w: 1.5, seg: [[Z10, [8,820,55,860,75,905,110,960,150,1000,190,1025,230,1050,270,1048,300,1052,340,1065,385,1065,430,1060,470,1040,497,1030,519,1005,541,975,585,940,607,925,651,910,673,905,696,890,718,865,740,850,762,800,784,782,806,770,826,750,848,722,870,695,892,672,914,630,936,595,958,560,981,535,1003,515,1025,497,1047,485,1069,480,1091,463]],
    [Z12, [0,910,45,910,87,925,150,955,220,963,263,955,335,963,371,948,443,938,479,910,551,870,623,840,659,820,731,785,767,768,799,750,870,720,907,698,943,678,979,670,1015,655,1050,628,1087,625,1159,620,1195,640,1231,660,1267,665,1303,668,1375,650,1411,625,1447,590,1500,548]],
    [Z11, [423,840,463,790,480,765,520,735,560,722,600,650,640,615,700,575,725,560,760,575,800,625,835,663,880,663,916,640,950,622,990,645,1034,637,1074,650,1114,655,1153,600,1193,578,1252,557,1292,572,1332,578,1350,597]]] },
  { col: '#00e400', w: 1.6, seg: [[Z10, [8,856,60,870,130,887,190,888,250,885,300,885,340,890,440,892,480,880,550,875,600,868,660,870,710,856,770,855,850,855,920,840,970,825,1050,812,1100,805,1150,795,1200,788,1246,785]],
    [Z12, [263,1222,340,1203,443,1150,540,1090,623,1050,695,1025,767,1010,835,985,943,955,1050,908,1195,860,1267,840,1375,805,1500,745]],
    [Z11, [445,1045,490,1030,545,990,605,955,660,930,700,922,740,895,800,878,835,855,900,800,955,762,1015,740,1100,743,1150,722,1210,703,1260,670,1350,645]]] },
  { col: '#b4b4b4', w: 1.6, seg: [[Z10, [8,783,60,812,150,855,220,870,350,872,460,868,560,855,640,848,740,838,830,830,900,812,970,803,1100,803,1190,805,1320,800,1400,772,1500,740,1568,725]],
    [Z11, [60,1475,150,1462,240,1418,290,1405,400,1355,450,1338,520,1318,600,1285,660,1268,730,1243,800,1228,870,1195,950,1150,1040,1095,1120,1050,1170,1027,1240,990,1350,943]]] },
  { col: '#0000e0', w: 1.6, seg: [[Z11, [755,1333,825,1335,835,1338,885,1331,930,1325,1000,1322,1120,1320,1165,1321,1280,1321,1320,1313,1350,1312]]] }
];
function pts(seg) {
  const out = [];
  for (const [z, a] of seg) for (let i = 0; i < a.length; i += 2) out.push(z(a[i], a[i + 1]).map(v => v.toFixed(1)).join(','));
  return out.join(' ');
}
function dotted(svg, y, x1, x2) {
  add(svg, 'line', { x1, x2, y1: y, y2: y, stroke: DOT, 'stroke-width': 1.6, 'stroke-dasharray': '2 4' });
}

/* price chart */
const k = document.getElementById('kline');
const prices = ['6.40','6.20','6.00','5.80','5.60','5.40','5.20','5.00','4.80','4.60','4.40','4.20','4.00'];
prices.forEach((p, n) => {
  const y = Math.round(121 + n * 55.1) + .5;
  if (p === '4.40' || p === '4.20') { dotted(k, y, 0, 536); dotted(k, y, 1640, 1711); }
  else dotted(k, y, 0, 1711);
  add(k, 'line', { x1: 1711, x2: 1719, y1: y, y2: y, stroke: AX, 'stroke-width': 2 });
  add(k, 'text', { class: 'axis-t', x: 1778, y: y + 6.5 }, p);
  if (n < 12) add(k, 'line', { x1: 1711, x2: 1715, y1: y + 27.5, y2: y + 27.5, stroke: AX, 'stroke-width': 1.5 });
});
add(k, 'line', { x1: 1711, x2: 1711, y1: 68, y2: 825, stroke: AX, 'stroke-width': 2 });

candles.forEach((c, i) => {
  const [t, h, o, b, l] = c;
  const x = Math.round(X(i)) + .5;
  if (t === 'r') {
    add(k, 'line', { x1: x, x2: x, y1: h, y2: o, stroke: RED, 'stroke-width': 1.3 });
    add(k, 'line', { x1: x, x2: x, y1: b, y2: l, stroke: RED, 'stroke-width': 1.3 });
    add(k, 'rect', { x: x - 3.5, y: o, width: 7, height: Math.max(b - o, 2), fill: '#000', stroke: RED, 'stroke-width': 1.3 });
  } else {
    const col = t === 'w' ? '#f0f0f0' : CY;
    const wick = t === 'w' ? '#f0f0f0' : '#3fd0d0';
    add(k, 'line', { x1: x, x2: x, y1: h, y2: l, stroke: wick, 'stroke-width': 1.3 });
    add(k, 'rect', { x: x - 3.75, y: o, width: 7.5, height: Math.max(b - o, 2), fill: col });
  }
});
lines.forEach(L => add(k, 'polyline', { points: pts(L.seg), fill: 'none', stroke: L.col, 'stroke-width': L.w, 'stroke-linejoin': 'round' }));

/* highest and lowest price markers */
add(k, 'path', { d: 'M1095.500 98V115M1095.500 97l-1.500 5M1095.500 97l4 3M1096 98l13 5', fill: 'none', stroke: '#c8c8c8', 'stroke-width': 1.2 });
add(k, 'text', { class: 'peak-t', x: 1116, y: 112 }, '6.48');
add(k, 'path', { d: 'M53 770V795M53 794h17M53 794l5-3M53 794l5 3', fill: 'none', stroke: '#c8c8c8', 'stroke-width': 1.2 });
add(k, 'text', { class: 'peak-t', x: 73, y: 804 }, '3.96');
/* toolbar glyphs at the top right of the chart */
add(k, 'path', { d: 'M1668.500 74l7 8-7 8-7-8z', fill: 'none', stroke: '#7a7a7a', 'stroke-width': 1.3 });
add(k, 'rect', { x: 1688, y: 74.5, width: 16, height: 15, rx: 2, fill: 'none', stroke: '#7a7a7a', 'stroke-width': 2 });
add(k, 'rect', { x: 1696, y: 77, width: 5, height: 10, fill: '#8a8a8a' });

/* volume chart */
const v = document.getElementById('vol');
const vols = ['16000','14000','12000','10000','8000','6000','4000','2000'];
vols.forEach((t, n) => {
  const y = Math.round(880 + n * 49.3) + .5;
  dotted(v, y, 0, 1711);
  add(v, 'line', { x1: 1711, x2: 1719, y1: y, y2: y, stroke: AX, 'stroke-width': 2 });
  add(v, 'text', { class: 'axis-t', x: 1778, y: y + 7 }, t);
  add(v, 'line', { x1: 1711, x2: 1715, y1: y + 24.6, y2: y + 24.6, stroke: AX, 'stroke-width': 1.5 });
});
add(v, 'line', { x1: 1711, x2: 1711, y1: 827, y2: 1281, stroke: AX, 'stroke-width': 2 });
add(v, 'line', { x1: 1711, x2: 1787, y1: 829, y2: 829, stroke: AX, 'stroke-width': 2 });

const vt = `c1352,c1342,r1343,c1352,r1358,r1343,r1347,r1312,r1316,c1329,r1285,r1231,c1288,c1293,c1320,r1325,c1342,c1338,r1347,r1347,r1312,c1338,r1343,r1271,r1307,c1333,r1262,c1221,c1284,r1312,r1298,r1145,r592,c870,r1015,c1131,c1190,r1248,r826,r952,r1181,r1060,r1023,r916,c1135,r1195,c1221,c1204,c1257,r1267,r1303,r1236,c1252,c1298,c1312,r1298,c1275,r898,c1037,c1243,r722,c136,r433,r411,c533,c770,c965,r1020,r1095,c1140,c1230,r1215,r1275,c1095,r1245,r1272,r1258,r1222,r1172,r1181,c1190,r1092,r1195,r1154,c1167,r1226,r988,c1140,r820,r488,c636,r336,c721,c870,c1055,c1014,r1195,c1204,r1257,r1140,r830,r943,c1113,c1131,r1163,c1248,c1248,r1245,c1217,c1239,c1217,r1204,c1198,r1217,r1186,c1217,r1172,r1213,r1163,r1163,c1222,r1163,r1204,c1190,c1176,r1217,c1198,r1127,r1109,c970,c1104,c1181,c1222,r1177,r1204,c1145,r1172,r1195,c1163,c840`;
vt.split(',').forEach((s, i) => {
  const top = 810 + s.slice(1) / 3, base = 1274;
  const x = Math.round(X(i)) + .5;
  if (s[0] === 'r') add(v, 'rect', { x: x - 3.5, y: top, width: 7, height: base - top, fill: '#000', stroke: RED, 'stroke-width': 1.4 });
  else add(v, 'rect', { x: x - 3.5, y: top, width: 7.5, height: base - top + .7, fill: CY });
});
const sky = [[Z8, [10,966,268,966,293,1232,640,1232,662,1223,762,1223,787,593,1348,593,1372,899,1442,899,1442,660,1465,138]],
             [Z9, [234,137,255,989,297,989,318,488,338,488,359,336,1130,336,1151,970,1338,970]]];
add(v, 'polyline', { points: pts(sky), fill: 'none', stroke: '#4da6d9', 'stroke-width': 1.6 });
const yl = [[Z8, [10,1352,93,1352,95,1358,1160,1358,1183,1304,1265,1304,1285,1308]],
            [Z9, [463,1308,484,1259,1170,1259,1192,1223,1318,1223,1339,1365]]];
add(v, 'polyline', { points: pts(yl), fill: 'none', stroke: '#f4f400', 'stroke-width': 1.6 });
const dot = Z8(1272, 1308);
add(v, 'circle', { cx: dot[0], cy: dot[1], r: 2.5, fill: '#f02020' });

/* date axis */
const d = document.getElementById('dates');
[87,135,184,297,363,428,560,626,693,823,886,1128,1189,1257,1326,1394,1463,1530,1600,1660].forEach(x =>
  add(d, 'line', { x1: x + .5, x2: x + .5, y1: 1283, y2: 1287, stroke: AX }));
[[5,'2022年'],[235,'11'],[498,'12'],[761,'1'],[951,'2']].forEach(([x, t]) => {
  add(d, 'text', { class: 'date-t', x, y: 1301 }, t);
  if (x > 5) add(d, 'line', { x1: x - 3.5, x2: x - 3.5, y1: 1283, y2: 1306, stroke: AX, 'stroke-width': 1.5 });
});
add(d, 'rect', { x: 976.5, y: 1283.5, width: 140, height: 21, fill: '#00008c', stroke: '#a80000' });
add(d, 'text', { class: 'date-tag', x: 978, y: 1300 }, '2023/02/03/五');
add(d, 'line', { x1: 1711, x2: 1711, y1: 1283, y2: 1306, stroke: AX, 'stroke-width': 2 });
add(d, 'line', { x1: 0, x2: 1787, y1: 1305, y2: 1305, stroke: AX, 'stroke-width': 2 });
```
